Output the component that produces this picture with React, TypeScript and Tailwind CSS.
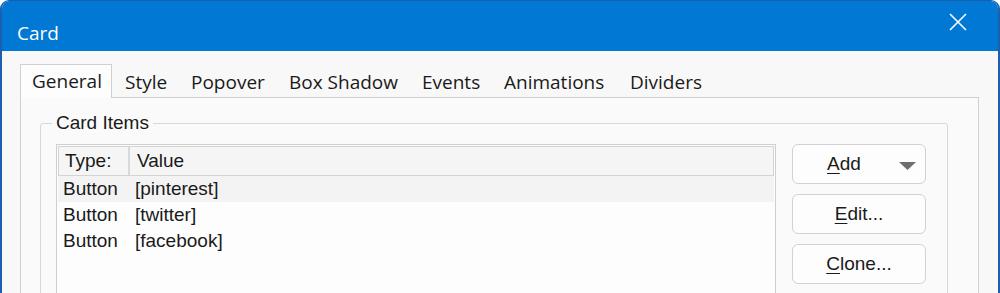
import React from "react";

const segoe = { fontFamily: '"Open Sans", "Noto Sans", sans-serif' };

function Tab({ label, w, selected }: { label: string; w: number; selected?: boolean }) {
  if (selected) {
    return (
      <div
        className="relative z-10 flex h-[34px] items-center border-x border-t border-[#d0d0d0] bg-[#fdfdfd] pl-[11px] text-[19px] text-[#1a1a1a]"
        style={{ width: w }}
      >
        <span className="-mt-[1px]">{label}</span>
      </div>
    );
  }
  return (
    <div className="flex h-[33px] items-center pl-[13px] text-[19px] text-[#1a1a1a]" style={{ width: w }}>
      <span className="mt-[1px]">{label}</span>
    </div>
  );
}

function Btn({ children, arrow }: { children: React.ReactNode; arrow?: boolean }) {
  return (
    <div className="relative flex h-[40px] w-[134px] items-center justify-center rounded-[6px] border border-[#d2d2d2] bg-[#fdfdfd] text-[19px] text-[#1a1a1a]">
      {arrow ? (
        <>
          <span className="-ml-[30px]">{children}</span>
          <svg className="absolute left-[106px] top-[17px]" width="17" height="8" viewBox="0 0 17 8">
            <path d="M0 0 L17 0 L8.5 8 Z" fill="#6e6e6e" />
          </svg>
        </>
      ) : (
        <span>{children}</span>
      )}
    </div>
  );
}

export default function App() {
  const arial = { fontFamily: '"Liberation Sans", Arial, sans-serif' };
  const rows = [
    ["Button", "[pinterest]"],
    ["Button", "[twitter]"],
    ["Button", "[facebook]"],
  ];
  return (
    <div className="h-[293px] w-[1000px] overflow-hidden bg-white">
      <div className="flex h-[320px] w-[1000px] flex-col overflow-hidden rounded-t-[9px] border-x-2 border-t border-[#1b5fae] bg-[#f8f8f8]">
        {/* Title bar */}
        <div className="flex h-[50px] shrink-0 items-center justify-between bg-[#0078d4] pl-[15px] pr-[31px] text-white" style={segoe}>
          <span className="mt-[14px] text-[19px]">Card</span>
          <svg width="18" height="18" viewBox="0 0 18 18" className="-mt-[8px]">
            <path d="M1 1 L17 17 M17 1 L1 17" stroke="white" strokeWidth="1.6" fill="none" />
          </svg>
        </div>
        {/* Body */}
        <div className="flex flex-col pl-[18px] pr-[19px] pt-[14px]">
          <div className="flex h-[33px] items-end" style={segoe}>
            <Tab label="General" w={92} selected />
            <Tab label="Style" w={66} />
            <Tab label="Popover" w={98} />
            <Tab label="Box Shadow" w={133} />
            <Tab label="Events" w={82} />
            <Tab label="Animations" w={126} />
            <Tab label="Dividers" w={100} />
          </div>
          <div className="-mt-[1px] h-[220px] border border-[#d0d0d0] bg-[#fafafa] pl-[19px] pr-[30px] pt-[25px]" style={arial}>
            {/* Group box */}
            <div className="relative h-[200px] rounded-[3px] border border-[#d8d8d8] pl-[15px] pr-[20px] pt-[20px]">
              <span className="absolute -top-[13px] left-[11px] bg-[#fafafa] px-[4px] text-[19px] leading-[24px] text-[#1a1a1a]">
                Card Items
              </span>
              <div className="flex gap-[16px]">
                <div className="h-[160px] w-[720px] border border-[#cfcfcf] bg-[#fdfdfd] p-[1px] text-[19px] text-[#1a1a1a]">
                  <div className="flex h-[30px] border border-[#d4d4d4] bg-[#f5f5f5]">
                    <div className="flex w-[71px] items-center border-r-2 border-[#d8d8d8] pl-[6px]">Type:</div>
                    <div className="flex flex-1 items-center pl-[7px]">Value</div>
                  </div>
                  {rows.map((r, i) => (
                    <div key={i} className={`flex h-[26px] items-center ${i === 0 ? "bg-[#f3f3f3]" : ""}`}>
                      <span className="w-[77px] pl-[5px]">{r[0]}</span>
                      <span>{r[1]}</span>
                    </div>
                  ))}
                </div>
                <div className="flex flex-col gap-[10px]">
                  <Btn arrow>
                    <span className="underline decoration-1 underline-offset-[3px]">A</span>dd
                  </Btn>
                  <Btn>
                    <span className="underline decoration-1 underline-offset-[3px]">E</span>dit...
                  </Btn>
                  <Btn>
                    <span className="underline decoration-1 underline-offset-[3px]">C</span>lone...
                  </Btn>
                </div>
              </div>
            </div>
          </div>
        </div>
      </div>
    </div>
  );
}
